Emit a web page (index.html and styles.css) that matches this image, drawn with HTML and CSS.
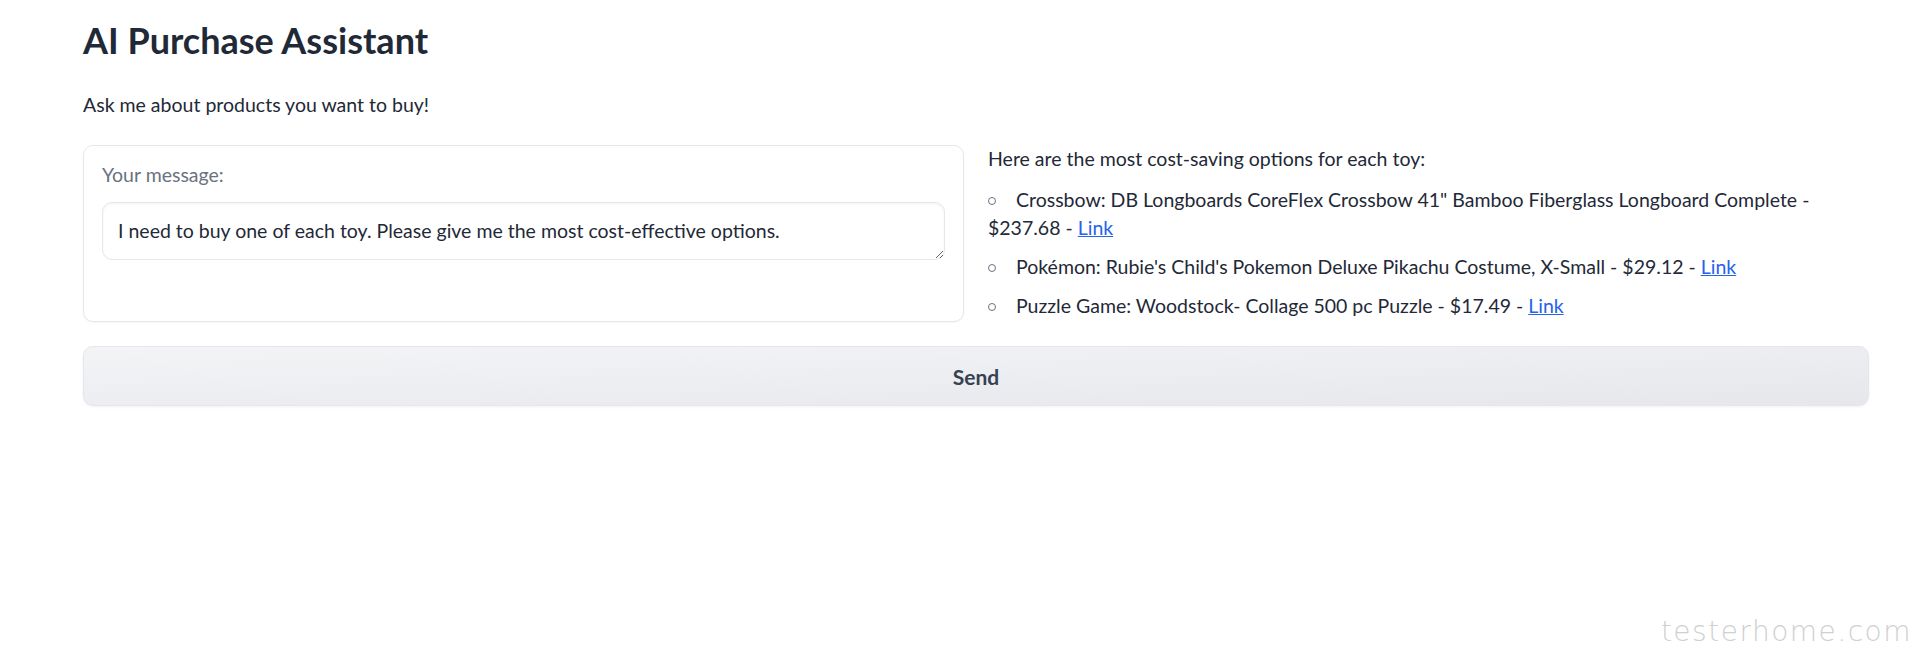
FILE: index.html
```html
<!DOCTYPE html>
<html>
<head>
    <title>AI Purchase Assistant</title>
    <link rel="stylesheet" href="styles.css">
</head>
<body>
<div class="page">
    <h1 class="title">AI Purchase Assistant</h1>
    <p class="intro">Ask me about products you want to buy!</p>

    <div class="row">
        <div class="card">
            <div class="label-line"><label class="label" for="msg">Your message:</label></div>
            <textarea id="msg" class="input" rows="1">I need to buy one of each toy. Please give me the most cost-effective options.</textarea>
        </div>
        <div class="answer">
            <p>Here are the most cost-saving options for each toy:</p>
            <ul class="options">
                <li>Crossbow: DB Longboards CoreFlex Crossbow 41" Bamboo Fiberglass Longboard Complete - $237.68 - <a href="#">Link</a></li>
                <li>Pokémon: Rubie's Child's Pokemon Deluxe Pikachu Costume, X-Small - $29.12 - <a href="#">Link</a></li>
                <li>Puzzle Game: Woodstock- Collage 500 pc Puzzle - $17.49 - <a href="#">Link</a></li>
            </ul>
        </div>
    </div>

    <button class="send">Send</button>
</div>
<div class="watermark">testerhome.com</div>
</body>
</html>
```

FILE: styles.css
```css
body {
margin: 0;
height: 672px;
position: relative;
overflow: hidden;
background: #fff;
font-family: Lato, "Noto Sans", sans-serif;
color: #1f2937;
}

.page {
padding: 0 51px 0 83px;
}

.title {
margin: 20px 0 0;
font-size: 36px;
line-height: 40px;
font-weight: bold;
}

.intro {
margin: 31px 0 26px;
font-size: 19.5px;
line-height: 28px;
}

.row {
display: grid;
grid-template-columns: 1fr 1fr;
gap: 24px;
}

.card {
border: 1px solid #e5e7eb;
border-radius: 10px;
padding: 15px 18px 61px;
box-shadow: 0 1px 2px rgba(0, 0, 0, 0.04);
background: #fff;
}

.label-line {
height: 28px;
margin-bottom: 13px;
}

.label {
font-size: 19.5px;
line-height: 28px;
color: #6b7280;
}

.input {
display: block;
box-sizing: border-box;
width: 100%;
height: 58px;
padding: 14px 15px;
border: 1px solid #e5e7eb;
border-radius: 10px;
box-shadow: inset 0 1px 3px rgba(0, 0, 0, 0.05);
font-family: Lato, "Noto Sans", sans-serif;
font-size: 19.5px;
line-height: 28px;
color: #1f2937;
resize: vertical;
outline: none;
overflow: hidden;
}

.answer {
font-size: 19.5px;
line-height: 28px;
}

.answer p {
margin: 0;
}

.options {
list-style: none;
margin: 13px 0 0;
padding: 0;
}

.options li + li {
margin-top: 11px;
}

.options li::before {
content: "";
display: inline-block;
width: 6px;
height: 6px;
border: 1px solid #6b7280;
border-radius: 50%;
margin-right: 20px;
vertical-align: 2px;
}

.options a {
color: #2563eb;
text-decoration: underline;
}

.send {
display: flex;
align-items: center;
justify-content: center;
box-sizing: border-box;
width: 100%;
height: 60px;
margin-top: 24px;
border: 1px solid #e5e7eb;
border-radius: 10px;
background: linear-gradient(to bottom right, #f3f4f6, #e5e7eb);
box-shadow: 0 1px 3px rgba(0, 0, 0, 0.06);
font-family: Lato, "Noto Sans", sans-serif;
font-size: 21px;
font-weight: bold;
color: #374151;
}

.watermark {
position: absolute;
right: 8px;
bottom: 24px;
font-family: "DejaVu Sans", sans-serif;
font-weight: 200;
font-size: 28px;
letter-spacing: 1.5px;
color: #d0d0d0;
}
```
